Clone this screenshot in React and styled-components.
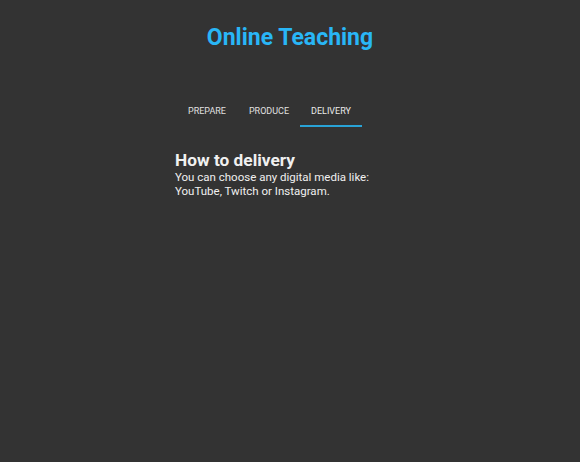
import styled, { createGlobalStyle } from 'styled-components'
import { useState } from 'react'

const GlobalStyle = createGlobalStyle`
html, body {
  margin: 0;
  padding: 0;
  background: #333333;
  font-family: Roboto, "Noto Sans", sans-serif;
}
`

const Page = styled.div`
width: 580px;
height: 462px;
display: flex;
flex-direction: column;
align-items: center;
`
const Title = styled.h1`
margin: 23px 0 0 0;
font-size: 23px;
font-weight: bold;
color: #29b6f6;
line-height: 30px;
`
const Panel = styled.div`
width: 230px;
margin-top: 42px;
display: flex;
flex-direction: column;
`
const TabBar = styled.div`
display: flex;
padding-left: 1px;
`
const Tab = styled.button`
width: 62px;
height: 32px;
padding: 0;
border: none;
background: none;
font-family: Roboto, sans-serif;
font-size: 9px;
font-weight: 400;
color: ${p => p.$active ? '#eaeaea' : '#e0e0e0'};
cursor: pointer;
position: relative;
&::after {
  content: '';
  position: absolute;
  left: 0;
  right: 0;
  bottom: 0;
  height: 2px;
  background: ${p => p.$active ? '#29a3d6' : 'transparent'};
}
`
const Content = styled.div`
margin-top: 23px;
color: #f0f0f0;
`
const Heading = styled.h2`
margin: 0;
font-size: 17.3px;
font-weight: bold;
line-height: 20px;
`
const Text = styled.p`
margin: 0;
font-size: 11.5px;
line-height: 14px;
`

const tabs = [
  { label: 'PREPARE', title: 'How to prepare', text: 'Plan your lessons and gather the materials you need.' },
  { label: 'PRODUCE', title: 'How to produce', text: 'Record your lessons with a camera and a microphone.' },
  { label: 'DELIVERY', title: 'How to delivery', text: 'You can choose any digital media like: YouTube, Twitch or Instagram.' },
]

export default function App() {
  const [active, setActive] = useState(2)
  const cur = tabs[active]
  return (
    <>
      <GlobalStyle />
      <Page>
        <Title>Online Teaching</Title>
        <Panel>
          <TabBar>
            {tabs.map((t, idx) => (
              <Tab key={t.label} $active={idx === active} onClick={() => setActive(idx)}>{t.label}</Tab>
            ))}
          </TabBar>
          <Content>
            <Heading>{cur.title}</Heading>
            <Text>{cur.text}</Text>
          </Content>
        </Panel>
      </Page>
    </>
  )
}
